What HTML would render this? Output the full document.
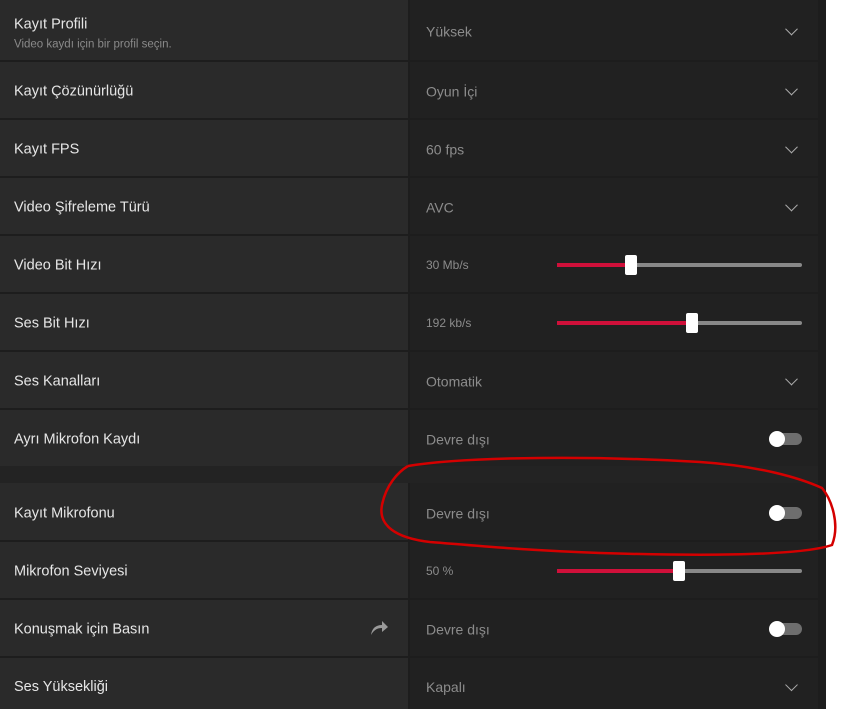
<!DOCTYPE html>
<html><head><meta charset="utf-8"><style>
body{margin:0;width:841px;height:709px;background:#fff;font-family:"Liberation Sans",sans-serif;overflow:hidden;position:relative}
#panel{position:absolute;left:0;top:0;width:826px;height:709px;background:#1d1d1d}
.row{position:absolute;left:0;width:818px;height:56px}
.l{position:absolute;left:0;top:0;width:408px;height:100%;background:#2a2a2a}
.r{position:absolute;left:410px;top:0;width:408px;height:100%;background:#212121}
.t{position:absolute;left:14px;top:50%;transform:translateY(-42%);color:#e6e6e6;font-size:14.5px}
.s{display:block;color:#8a8a8a;font-size:11.5px;margin-top:6px}
.v{position:absolute;left:16px;top:50%;transform:translateY(-42%);color:#8c8c8c;font-size:14px}
.v.sm{font-size:12px}
.chev{position:absolute;right:22px;top:50%;width:8px;height:8px;border-right:1.6px solid #aaa;border-bottom:1.6px solid #aaa;transform:translateY(-60%) rotate(45deg)}
.tg{position:absolute;left:360px;top:50%;margin-top:-5px;width:32px;height:12px;border-radius:6px;background:#6e6e6e}
.tg:before{content:"";position:absolute;left:-1px;top:-2px;width:16px;height:16px;border-radius:50%;background:#fff}
.sl{position:absolute;left:147px;top:50%;margin-top:-1px;width:245px;height:4px;background:#888;border-radius:2px}
.sl i{position:absolute;left:0;top:0;height:4px;background:#d0103a}
.sl b{position:absolute;top:-8px;width:12px;height:20px;background:#fff;border-radius:2px}
</style></head><body><div id="panel">
<div class="row" style="top:0;height:60px"><div class="l"><div class="t" style="transform:translateY(-40%)">Kayıt Profili<span class="s">Video kaydı için bir profil seçin.</span></div></div><div class="r"><div class="v">Yüksek</div><div class="chev"></div></div></div>
<div class="row" style="top:62px"><div class="l"><div class="t">Kayıt Çözünürlüğü</div></div><div class="r"><div class="v">Oyun İçi</div><div class="chev"></div></div></div>
<div class="row" style="top:120px"><div class="l"><div class="t">Kayıt FPS</div></div><div class="r"><div class="v">60 fps</div><div class="chev"></div></div></div>
<div class="row" style="top:178px"><div class="l"><div class="t">Video Şifreleme Türü</div></div><div class="r"><div class="v">AVC</div><div class="chev"></div></div></div>
<div class="row" style="top:236px"><div class="l"><div class="t">Video Bit Hızı</div></div><div class="r"><div class="v sm">30 Mb/s</div><div class="sl"><i style="width:74px"></i><b style="left:68px"></b></div></div></div>
<div class="row" style="top:294px"><div class="l"><div class="t">Ses Bit Hızı</div></div><div class="r"><div class="v sm">192 kb/s</div><div class="sl"><i style="width:135px"></i><b style="left:129px"></b></div></div></div>
<div class="row" style="top:352px"><div class="l"><div class="t">Ses Kanalları</div></div><div class="r"><div class="v">Otomatik</div><div class="chev"></div></div></div>
<div class="row" style="top:410px"><div class="l"><div class="t">Ayrı Mikrofon Kaydı</div></div><div class="r"><div class="v">Devre dışı</div><div class="tg"></div></div></div>
<div class="row" style="top:466px;height:17px;background:#232323"></div>
<div class="row" style="top:483px;height:57px"><div class="l"><div class="t">Kayıt Mikrofonu</div></div><div class="r"><div class="v">Devre dışı</div><div class="tg"></div></div></div>
<div class="row" style="top:542px"><div class="l"><div class="t">Mikrofon Seviyesi</div></div><div class="r"><div class="v sm">50 %</div><div class="sl"><i style="width:122px"></i><b style="left:116px"></b></div></div></div>
<div class="row" style="top:600px"><div class="l"><div class="t">Konuşmak için Basın</div><svg style="position:absolute;left:369px;top:19px" width="20" height="18" viewBox="0 0 20 18"><path d="M2 16 C3 9 7 6 13 6 L13 2 L19 8 L13 13 L13 9 C8 9 5 11 2 16Z" fill="#9a9a9a"/></svg></div><div class="r"><div class="v">Devre dışı</div><div class="tg"></div></div></div>
<div class="row" style="top:658px;height:51px"><div class="l"><div class="t" style="transform:translateY(-30%)">Ses Yüksekliği</div></div><div class="r"><div class="v" style="transform:translateY(-30%)">Kapalı</div><div class="chev" style="transform:translateY(-40%) rotate(45deg)"></div></div></div>
</div>
<svg style="position:absolute;left:0;top:0" width="841" height="709"><path d="M408 466 C470 456 600 456 700 462 C760 466 800 478 822 488 C832 500 840 525 832 545 C800 556 700 556 600 553 C520 550 480 546 430 542 C395 538 378 525 382 505 C386 485 398 472 408 466" fill="none" stroke="#d40000" stroke-width="2.5"/></svg>
</body></html>
